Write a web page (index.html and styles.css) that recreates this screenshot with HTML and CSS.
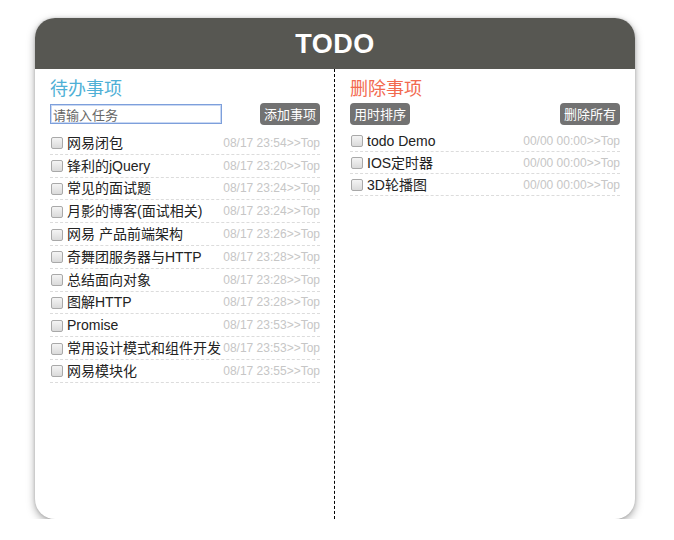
FILE: index.html
```html
<!DOCTYPE html>
<html lang="zh">
<head>
<meta charset="utf-8">
<title>TODO</title>
<link rel="stylesheet" href="styles.css">
</head>
<body>
<div class="app">
  <header class="app-header"><h1 class="app-title">TODO</h1></header>
  <main class="app-body">
    <section class="col col-todo">
      <h2 class="col-title todo-title">待办事项</h2>
      <div class="toolbar">
        <input class="task-input" type="text" placeholder="请输入任务">
        <button class="btn">添加事项</button>
      </div>
      <ul class="list list-todo">
        <li class="item"><span class="check"></span><span class="item-text">网易闭包</span><span class="item-time">08/17 23:54&gt;&gt;Top</span></li>
        <li class="item"><span class="check"></span><span class="item-text">锋利的jQuery</span><span class="item-time">08/17 23:20&gt;&gt;Top</span></li>
        <li class="item"><span class="check"></span><span class="item-text">常见的面试题</span><span class="item-time">08/17 23:24&gt;&gt;Top</span></li>
        <li class="item"><span class="check"></span><span class="item-text">月影的博客(面试相关)</span><span class="item-time">08/17 23:24&gt;&gt;Top</span></li>
        <li class="item"><span class="check"></span><span class="item-text">网易 产品前端架构</span><span class="item-time">08/17 23:26&gt;&gt;Top</span></li>
        <li class="item"><span class="check"></span><span class="item-text">奇舞团服务器与HTTP</span><span class="item-time">08/17 23:28&gt;&gt;Top</span></li>
        <li class="item"><span class="check"></span><span class="item-text">总结面向对象</span><span class="item-time">08/17 23:28&gt;&gt;Top</span></li>
        <li class="item"><span class="check"></span><span class="item-text">图解HTTP</span><span class="item-time">08/17 23:28&gt;&gt;Top</span></li>
        <li class="item"><span class="check"></span><span class="item-text">Promise</span><span class="item-time">08/17 23:53&gt;&gt;Top</span></li>
        <li class="item"><span class="check"></span><span class="item-text">常用设计模式和组件开发</span><span class="item-time">08/17 23:53&gt;&gt;Top</span></li>
        <li class="item"><span class="check"></span><span class="item-text">网易模块化</span><span class="item-time">08/17 23:55&gt;&gt;Top</span></li>
      </ul>
    </section>
    <section class="col col-done">
      <h2 class="col-title done-title">删除事项</h2>
      <div class="toolbar">
        <button class="btn">用时排序</button>
        <button class="btn">删除所有</button>
      </div>
      <ul class="list list-done">
        <li class="item"><span class="check"></span><span class="item-text">todo Demo</span><span class="item-time">00/00 00:00&gt;&gt;Top</span></li>
        <li class="item"><span class="check"></span><span class="item-text">IOS定时器</span><span class="item-time">00/00 00:00&gt;&gt;Top</span></li>
        <li class="item"><span class="check"></span><span class="item-text">3D轮播图</span><span class="item-time">00/00 00:00&gt;&gt;Top</span></li>
      </ul>
    </section>
  </main>
</div>
</body>
</html>
```
FILE: styles.css
```css
* { box-sizing: border-box; }
html, body { margin: 0; padding: 0; background: #fff; }
body {
  font-family: "Liberation Sans", "Noto Sans CJK SC", Arial, sans-serif;
  color: #222;
}
.app {
  width: 600px;
  height: 501px;
  margin: 18px 0 0 35px;
  border-radius: 20px;
  overflow: hidden;
  background: #fff;
  box-shadow: 0 3px 8px rgba(0,0,0,0.35), 0 0 3px rgba(0,0,0,0.15);
  display: flex;
  flex-direction: column;
}
.app-header {
  height: 51px;
  background: #575752;
  display: flex;
  align-items: center;
  justify-content: center;
}
.app-title {
  margin: 0;
  color: #fff;
  font-size: 27px;
  font-weight: bold;
  line-height: 1;
  padding-top: 2px;
  letter-spacing: 0.5px;
}
.app-body {
  flex: 1;
  display: grid;
  grid-template-columns: 300px 300px;
}
.col { padding: 6px 15px 0 15px; }
.col-todo { border-right: 1px dashed #000; padding-right: 14px; }
.col-title {
  margin: 0;
  font-size: 18px;
  font-weight: normal;
  line-height: 24px;
  font-family: "Noto Sans CJK SC", sans-serif;
}
.todo-title { color: #4fb0d6; }
.done-title { color: #f26a4f; }
.toolbar {
  margin-top: 4px;
  height: 22px;
  display: flex;
  align-items: center;
  justify-content: space-between;
}
.task-input {
  width: 172px;
  height: 20px;
  margin: 0;
  padding: 0 2px;
  border: 1px solid #7d9fdb;
  box-shadow: inset 0 0 0 1px #c9d8f3;
  font-size: 13px;
  font-family: "Noto Sans CJK SC", sans-serif;
  outline: none;
}
.task-input::placeholder { color: #666; }
.btn {
  height: 22px;
  margin: 0;
  padding: 0 4px;
  border: none;
  border-radius: 4px;
  background: #727272;
  color: #fff;
  font-size: 13px;
  line-height: 22px;
  font-family: "Noto Sans CJK SC", sans-serif;
}
.list { list-style: none; margin: 0; padding: 0; }
.list-todo { margin-top: 7px; }
.list-done { margin-top: 5px; }
.item {
  display: flex;
  align-items: center;
  border-bottom: 1px dashed #dcdcdc;
  font-size: 14px;
  white-space: nowrap;
}
.list-todo .item { height: 22.8px; }
.list-done .item { height: 22px; }
.check {
  flex: none;
  width: 12px;
  height: 12px;
  margin: 1px 4px 0 1px;
  border: 1px solid #a9a9a9;
  border-radius: 2px;
  background: linear-gradient(#f4f4f4, #dadada);
}
.item-text { flex: 1; color: #222; line-height: 18px; height: 18px; }
.item-time {
  flex: none;
  font-size: 12px;
  line-height: 18px;
  color: #c6c6c6;
}
```
